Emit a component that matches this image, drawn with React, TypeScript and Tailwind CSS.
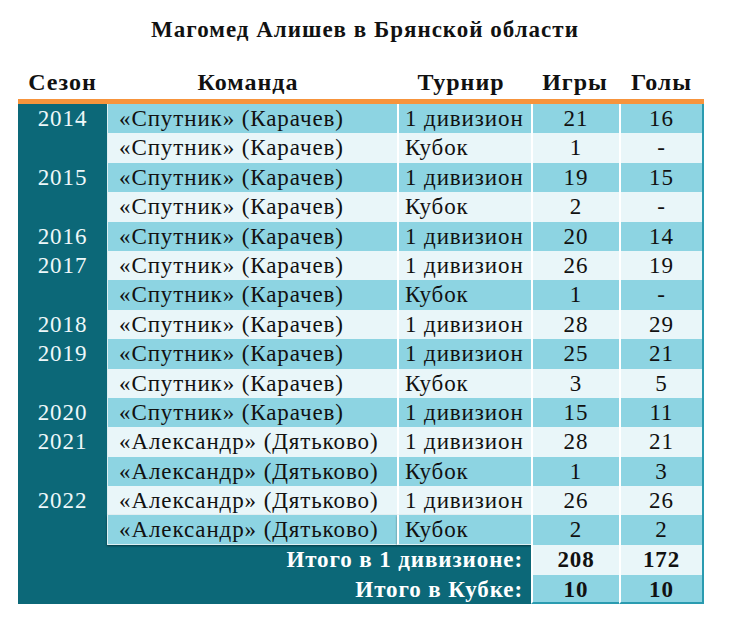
import React from "react";

type Row = { year?: string; team: string; tour: string; games: string; goals: string };

const SP = "«Спутник» (Карачев)";
const AL = "«Александр» (Дятьково)";
const D = "1 дивизион";
const K = "Кубок";

const rows: Row[] = [
  { year: "2014", team: SP, tour: D, games: "21", goals: "16" },
  { team: SP, tour: K, games: "1", goals: "-" },
  { year: "2015", team: SP, tour: D, games: "19", goals: "15" },
  { team: SP, tour: K, games: "2", goals: "-" },
  { year: "2016", team: SP, tour: D, games: "20", goals: "14" },
  { year: "2017", team: SP, tour: D, games: "26", goals: "19" },
  { team: SP, tour: K, games: "1", goals: "-" },
  { year: "2018", team: SP, tour: D, games: "28", goals: "29" },
  { year: "2019", team: SP, tour: D, games: "25", goals: "21" },
  { team: SP, tour: K, games: "3", goals: "5" },
  { year: "2020", team: SP, tour: D, games: "15", goals: "11" },
  { year: "2021", team: AL, tour: D, games: "28", goals: "21" },
  { team: AL, tour: K, games: "1", goals: "3" },
  { year: "2022", team: AL, tour: D, games: "26", goals: "26" },
  { team: AL, tour: K, games: "2", goals: "2" },
];

export default function App() {
  return (
    <div className="w-[730px] h-[622px] bg-white text-[#111] overflow-hidden font-[family-name:'Liberation_Serif','Times_New_Roman',serif]">
      <div className="pt-[16px] h-[44px] text-center font-bold text-[23px] tracking-[1px] leading-[28px]">
        Магомед Алишев в Брянской области
      </div>
      <div className="ml-[18px] w-[686px]">
        <div className="grid grid-cols-[89px_290px_134px_88px_85px] h-[55px] items-end pb-[3px] font-bold text-[24px] tracking-[1px] leading-[28px]">
          <div className="text-center">Сезон</div>
          <div className="text-center pr-[8px]">Команда</div>
          <div className="text-center pr-[6px]">Турнир</div>
          <div className="text-center">Игры</div>
          <div className="text-center">Голы</div>
        </div>
        <div className="h-[5px] bg-[#f7943c]" />
        <div className="grid grid-cols-[89px_290px_134px_88px_85px] bg-[#0c6878] text-[23px] tracking-[0.9px] leading-[29.4px]">
          {rows.map((r, i) => {
            const bg = i % 2 === 0 ? "bg-[#8dd4e2]" : "bg-[#e9f6f9]";
            const last = i === rows.length - 1;
            return (
              <React.Fragment key={i}>
                <div className="h-[29.4px] text-center text-[#eef8fa]">{r.year ?? ""}</div>
                <div className={`h-[29.4px] pl-[11px] whitespace-nowrap border-l border-[#dff0f3] ${bg} ${last ? "border-b border-b-[#dff0f3] shadow-[0_1px_2px_rgba(0,0,0,0.45)]" : ""}`}>
                  {r.team}
                </div>
                <div className={`h-[29.4px] pl-[6px] border-l-2 border-white whitespace-nowrap ${bg} ${last ? "border-b border-b-[#dff0f3] shadow-[0_1px_2px_rgba(0,0,0,0.45)]" : ""}`}>
                  {r.tour}
                </div>
                <div className={`h-[29.4px] text-center border-l-2 border-white ${bg}`}>{r.games}</div>
                <div className={`h-[29.4px] text-center border-l-2 border-white border-r-2 border-r-[#2a9bb0] ${bg}`}>{r.goals}</div>
              </React.Fragment>
            );
          })}
          <div className="col-span-3 h-[30px] leading-[30px] text-right pr-[8px] font-bold text-white">
            Итого в 1 дивизионе:
          </div>
          <div className="h-[30px] leading-[30px] text-center font-bold bg-[#e9f6f9] border-l-2 border-white">208</div>
          <div className="h-[30px] leading-[30px] text-center font-bold bg-[#e9f6f9] border-l-2 border-white border-r-2 border-r-[#2a9bb0]">172</div>
          <div className="col-span-3 h-[29px] leading-[29px] text-right pr-[8px] font-bold text-white">
            Итого в Кубке:
          </div>
          <div className="h-[29px] leading-[29px] text-center font-bold bg-[#8dd4e2] border-l-2 border-white border-b-2 border-b-[#2a9bb0]">10</div>
          <div className="h-[29px] leading-[29px] text-center font-bold bg-[#8dd4e2] border-l-2 border-white border-r-2 border-r-[#2a9bb0] border-b-2 border-b-[#2a9bb0]">10</div>
        </div>
      </div>
    </div>
  );
}
